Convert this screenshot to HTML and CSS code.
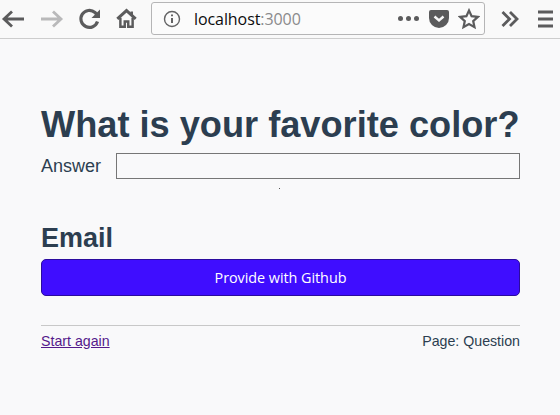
FILE: index.html
```html
<!DOCTYPE html>
<html lang="en">
<head>
<meta charset="utf-8">
<title>localhost:3000</title>
<link rel="stylesheet" href="styles.css">
</head>
<body>
<header class="toolbar">
  <svg class="tb-icon back" viewBox="0 0 24 24"><path d="M23 12H3M11 4.500L3 12l8 7.500"/></svg>
  <svg class="tb-icon forward" viewBox="0 0 24 24"><path d="M1 12h20M13 4.500l8 7.500-8 7.500"/></svg>
  <svg class="tb-icon reload" viewBox="0 0 24 24"><path d="M19.500 14.500a8.500 8.500 0 1 1-2.500-9L20 9"/><path class="fill" d="M22 2.500V11h-8.500z"/></svg>
  <svg class="tb-icon home" viewBox="0 0 24 24"><path class="thick" d="M1.500 12.500L12 3l10.500 9.500"/><path d="M5 11v10.500h5v-6h4v6h5V11M18 4v4"/></svg>
  <div class="urlbar">
    <svg class="info" viewBox="0 0 18 18"><circle cx="9" cy="9" r="7.500"/><path class="i-mark" d="M9 8v5M9 4.500v1.800"/></svg>
    <span class="url">localhost<span class="port">:3000</span></span>
    <span class="dots"><i></i><i></i><i></i></span>
    <svg class="pocket" viewBox="0 0 20 18"><path class="solid" d="M2 0h16a2 2 0 0 1 2 2v6a10 10 0 0 1-20 0V2a2 2 0 0 1 2-2z"/><path class="chev" d="M5.500 6.500L10 10.500l4.500-4"/></svg>
    <svg class="star" viewBox="0 0 22 22"><path d="M11 2.500l2.600 5.700 6.200.7-4.600 4.200 1.300 6.100L11 16.100l-5.500 3.100 1.300-6.100-4.600-4.200 6.200-.7z"/></svg>
  </div>
  <svg class="tb-icon more" viewBox="0 0 20 20"><path d="M2.500 3l7 7-7 7M10 3l7 7-7 7"/></svg>
  <svg class="tb-icon menu" viewBox="0 0 20 20"><path d="M2 3h15M2 10h15M2 17h15"/></svg>
</header>
<main class="page">
  <h1 class="question">What is your favorite color?</h1>
  <form class="answer-row">
    <label class="answer-label" for="answer">Answer</label>
    <input class="answer-input" id="answer" type="text">
  </form>
  <div class="speck-row"><span class="speck"></span></div>
  <h2 class="email-title">Email</h2>
  <button class="github" type="button">Provide with Github</button>
  <hr class="rule">
  <footer class="foot">
    <a class="again" href="#">Start again</a>
    <span>Page: Question</span>
  </footer>
</main>
</body>
</html>
```
FILE: styles.css
```css
* { box-sizing: border-box; }
html, body { margin: 0; height: 100%; }
body {
  background: #f9f9fa;
  color: #2c3e50;
  font-family: "Liberation Sans", Arial, sans-serif;
  overflow: hidden;
}
.toolbar {
  height: 39px;
  display: flex;
  align-items: center;
  border-bottom: 1px solid #cdcdcd;
  background: #f9f9f9;
  padding: 0 0 1px 1px;
}
.tb-icon { fill: none; stroke: #5b5b5c; stroke-width: 2.800; flex: none; }
.back { width: 24px; height: 24px; }
.forward { width: 24px; height: 24px; margin-left: 15px; stroke: #b9b9ba; }
.reload { width: 24px; height: 24px; margin-left: 14px; stroke-width: 3.200; }
.reload .fill { fill: #5b5b5c; stroke: none; }
.home { width: 21px; height: 21px; margin-left: 14px; }
.home .thick { stroke-width: 3.400; }
.urlbar {
  width: 334px;
  height: 33px;
  margin-left: 14px;
  display: flex;
  align-items: center;
  background: #fbfbfb;
  border: 1px solid #b5b5b6;
  border-radius: 3px;
  padding: 0 4px 0 11px;
  flex: none;
}
.info { width: 18px; height: 18px; fill: none; stroke: #636364; stroke-width: 1.400; flex: none; }
.info .i-mark { stroke-width: 2; }
.url { margin-left: 13px; font: 16px "Open Sans", sans-serif; color: #0c0c0d; letter-spacing: -.08px; }
.port { color: #8a8a8c; }
.dots { margin-left: auto; display: flex; gap: 3px; }
.dots i { width: 5px; height: 5px; border-radius: 50%; background: #5b5b5c; }
.pocket { width: 20px; height: 18px; margin-left: 10px; flex: none; }
.pocket .solid { fill: #5b5b5c; }
.pocket .chev { fill: none; stroke: #f9f9f9; stroke-width: 2.400; }
.star { width: 22px; height: 22px; margin-left: 9px; fill: none; stroke: #5b5b5c; stroke-width: 2.200; flex: none; }
.more { width: 20px; height: 20px; margin-left: 15px; }
.menu { width: 20px; height: 20px; margin-left: 16px; }
.page { padding: 65px 40px 0 41px; }
.question { margin: 0; font-size: 36.2px; line-height: 42px; font-weight: 700; white-space: nowrap; }
.answer-row { display: flex; align-items: center; margin-top: 7px; height: 26px; }
.answer-label { font-size: 18px; width: 75px; flex: none; }
.answer-input { flex: 1; min-width: 0; height: 26px; background: #f9f9fa; border: 1px solid #767676; border-radius: 0; padding: 0; }
.speck-row { height: 34px; }
.speck { display: block; width: 1px; height: 1px; background: #555; margin: 9px 0 0 238px; }
.email-title { margin: 0; font-size: 27px; line-height: 32px; font-weight: 700; }
.github {
  display: block;
  width: 100%;
  height: 37px;
  margin-top: 5px;
  background: #3f0dff;
  color: #fff;
  border: 1px solid #2b0b9e;
  border-radius: 5px;
  font: 14.4px "Open Sans", sans-serif;
  letter-spacing: -.05px;
}
.rule { border: 0; border-top: 1px solid #c8c8c8; margin: 29px 0 0; height: 0; }
.foot { display: flex; justify-content: space-between; margin-top: 7px; font-size: 14.2px; line-height: 16px; }
.again { color: #551a8b; }
```
